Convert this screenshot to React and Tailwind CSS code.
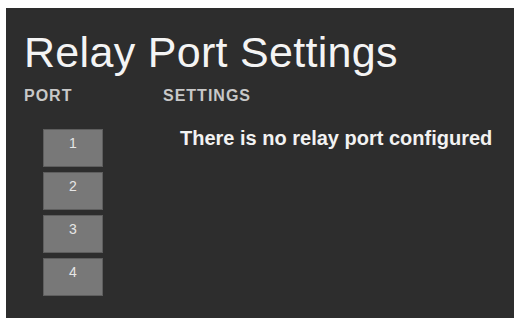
import React from 'react';

const ports = [1, 2, 3, 4];

export default function App() {
  return (
    <div className="w-[520px] h-[318px] bg-white pt-[8px] pl-[6px] pr-[6px] overflow-hidden font-['Liberation_Sans',Arial,sans-serif]">
      <div className="h-[310px] bg-[#2d2d2d] pl-[18px] pt-[23px]">
        {/* Title */}
        <h1 className="text-[43px] leading-[43px] text-[#f4f4f4] tracking-[0.3px]">
          Relay Port Settings
        </h1>

        {/* Column headers */}
        <div className="flex mt-[14px] text-[16px] leading-[16px] font-bold text-[#c8c8c8] tracking-[1px]">
          <div className="w-[139px]">PORT</div>
          <div>SETTINGS</div>
        </div>

        {/* Body */}
        <div className="flex mt-[25px]">
          <div className="w-[139px] pl-[19px] flex flex-col gap-[5px]">
            {ports.map(p => (
              <button
                key={p}
                className="w-[60px] h-[38px] bg-[#787878] border border-[#5e5e5e] pt-[6px] text-[14px] leading-[14px] text-[#e6e6e6] flex justify-center items-start"
              >
                {p}
              </button>
            ))}
          </div>
          <div className="pl-[17px] -mt-[1px]">
            <p className="text-[20px] leading-[20px] font-bold text-[#f2f2f2]">
              There is no relay port configured
            </p>
          </div>
        </div>
      </div>
    </div>
  );
}
